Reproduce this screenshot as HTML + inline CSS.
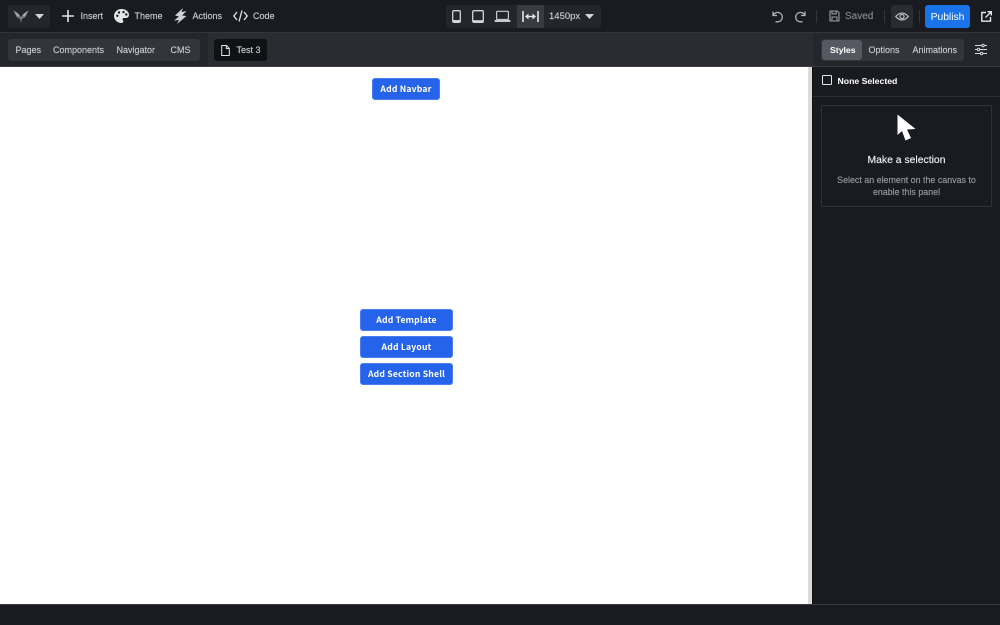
<!DOCTYPE html>
<html lang="en">
<head>
<meta charset="utf-8">
<title>Editor</title>
<style>
html,body{margin:0;padding:0;width:1000px;height:625px;overflow:hidden;background:#1a1b20}
body{position:relative;font-family:"Liberation Sans",sans-serif;color:#c9cace;font-size:9px}
.a{position:absolute}
.t{position:absolute;white-space:nowrap;line-height:12px;-webkit-text-stroke:.15px currentColor}
svg{position:absolute;overflow:visible}
.btn{position:absolute;background:#2563eb;border:1px solid #4a7df0;border-radius:3px;box-sizing:border-box;color:#fff;font:bold 8.600px/21px "Noto Sans CJK JP",sans-serif;letter-spacing:.2px;text-align:center;white-space:nowrap}
</style>
</head>
<body>
<!-- Top bar -->
<div class="a" style="left:0;top:0;width:1000px;height:32px;background:#1a1b20"></div>
<div class="a" style="left:0;top:32px;width:1000px;height:1px;background:#33353b"></div>
<!-- Second bar -->
<div class="a" style="left:0;top:33px;width:1000px;height:33px;background:#2a2c32"></div>
<div class="a" style="left:0;top:66px;width:1000px;height:1px;background:#3a3c42"></div>
<div class="a" style="left:0;top:33px;width:208px;height:33px;background:#24262b"></div>

<!-- Logo -->
<div class="a" style="left:8px;top:5px;width:42px;height:23px;background:#24262b;border-radius:3px"></div>
<svg style="left:13px;top:9px" width="16" height="15" viewBox="0 0 16 15"><path d="M.5 1.500 5 4.500 8 8 11 4.500 15.500 1.500 12.500 8 9 10 8 14 7 10 3.500 8Z" fill="#77787c"/><path d="M.5 1.500 5 4.500 7 7 4.500 7.500ZM15.500 1.500 11 4.500 9 7 11.500 7.500Z" fill="#a8a9ad"/></svg>
<svg style="left:35px;top:14px" width="9" height="5" viewBox="0 0 9 5"><path d="M0 0H9L4.500 5Z" fill="#d5d6d9"/></svg>

<!-- Insert -->
<svg style="left:62px;top:10px" width="12" height="12" viewBox="0 0 12 12"><path d="M6 0V12M0 6H12" stroke="#e4e5e7" stroke-width="1.600"/></svg>
<div class="t" style="left:80.500px;top:10px;">Insert</div>
<!-- Theme -->
<svg style="left:114px;top:9px" width="15" height="14" viewBox="0 0 15 14"><path fill-rule="evenodd" fill="#e4e5e7" d="M7.500 0C3.400 0 0 3.100 0 7s3.400 7 7.500 7c1.200 0 1.900-.7 1.900-1.600 0-.5-.3-.9-.5-1.200-.2-.3-.4-.6-.4-1 0-.7.600-1.200 1.300-1.200h1.900c1.900 0 3.300-1.300 3.300-3C15 2.600 11.700 0 7.500 0ZM3.300 8a1.200 1.200 0 1 1 0-2.400 1.200 1.200 0 0 1 0 2.400ZM5 4.700a1.200 1.200 0 1 1 0-2.400 1.200 1.200 0 0 1 0 2.400Zm4.500-.4a1.200 1.200 0 1 1 0-2.400 1.200 1.200 0 0 1 0 2.400Zm2.800 2.400a1.200 1.200 0 1 1 0-2.400 1.200 1.200 0 0 1 0 2.400Z"/></svg>
<div class="t" style="left:134.500px;top:10px;">Theme</div>
<!-- Actions -->
<svg style="left:174px;top:8px" width="13" height="16" viewBox="0 0 13 16"><path d="M9 0 1 7.500 5 8.500 0 12.500 5 12 3 16 12.500 8 8 7.500 12.500 3 7.500 4Z" fill="#d0d1d4"/></svg>
<div class="t" style="left:192.500px;top:10px;">Actions</div>
<!-- Code -->
<svg style="left:233px;top:10px" width="15" height="12" viewBox="0 0 15 12" fill="none" stroke="#e4e5e7" stroke-width="1.300"><path d="M4 2 .8 6 4 10M11 2l3.200 4L11 10M9 .5 6 11.500"/></svg>
<div class="t" style="left:253px;top:10px;">Code</div>

<!-- Device group -->
<div class="a" style="left:446px;top:5px;width:155px;height:23px;background:#24262b;border-radius:3px"></div>
<div class="a" style="left:517px;top:5px;width:27px;height:23px;background:#393b41"></div>
<svg style="left:452px;top:10px" width="9" height="13" viewBox="0 0 9 13"><rect x=".7" y=".7" width="7.600" height="11.600" rx="1.200" fill="none" stroke="#d4d5d8" stroke-width="1.300"/><rect x="1" y="10" width="7" height="2" fill="#d4d5d8"/></svg>
<svg style="left:472px;top:10px" width="12" height="13" viewBox="0 0 12 13"><rect x=".7" y=".7" width="10.600" height="11.600" rx="1.200" fill="none" stroke="#d4d5d8" stroke-width="1.300"/><rect x="1" y="10.200" width="10" height="2" fill="#d4d5d8"/></svg>
<svg style="left:494px;top:10px" width="17" height="13" viewBox="0 0 17 13" fill="none" stroke="#c8c9cc" stroke-width="1.200"><rect x="2.600" y="1.300" width="11.800" height="8.200" rx=".8"/><path d="M.5 10H16.500V11Q16.500 12 15.500 12H1.500Q.5 12 .5 11Z" fill="#c8c9cc" stroke="none"/></svg>
<svg style="left:522px;top:11px" width="17" height="11" viewBox="0 0 17 11"><path d="M1 0V11M16 0V11" stroke="#e4e5e7" stroke-width="1.600"/><path d="M4 5.500H13" stroke="#e4e5e7" stroke-width="1.400"/><path d="M3 5.500 6.500 2.500V8.500ZM14 5.500 10.500 2.500V8.500Z" fill="#e4e5e7"/></svg>
<div class="t" style="left:549px;top:11px;font-size:9.500px;">1450px</div>
<svg style="left:585px;top:14px" width="9" height="5" viewBox="0 0 9 5"><path d="M0 0H9L4.500 5Z" fill="#d5d6d9"/></svg>

<!-- Right top actions -->
<svg style="left:771px;top:9.500px" width="13" height="13" viewBox="0 0 13 13" fill="none" stroke="#b0b1b5" stroke-width="1.300"><path d="M2 1.500V5.500H6"/><path d="M2.300 5.300A4.700 4.700 0 1 1 6.500 11.800H4.500"/></svg>
<svg style="left:794px;top:9.500px" width="13" height="13" viewBox="0 0 13 13" fill="none" stroke="#b0b1b5" stroke-width="1.300"><path d="M11 1.500V5.500H7"/><path d="M10.700 5.300A4.700 4.700 0 1 0 6.500 11.800H8.500"/></svg>
<div class="a" style="left:816px;top:10px;width:1px;height:13px;background:#33353b"></div>
<svg style="left:829px;top:10px" width="11" height="12" viewBox="0 0 11 12" fill="none" stroke="#9a9b9f" stroke-width="1.100"><path d="M1 1H8.300L10 2.700V11H1Z"/><path d="M3 1V3.800H7.200V1M3 10.800V7H8V10.800"/></svg>
<div class="t" style="left:845px;top:11px;font-size:10px;color:#85868a;">Saved</div>
<div class="a" style="left:884px;top:10px;width:1px;height:13px;background:#33353b"></div>
<div class="a" style="left:891px;top:5px;width:22px;height:23px;background:#2a2c31;border-radius:3px"></div>
<svg style="left:895px;top:12px" width="14" height="9" viewBox="0 0 14 9" fill="none" stroke="#c8c9cc" stroke-width="1.100"><path d="M.7 4.500Q7 -2.500 13.300 4.500 7 11.500 .7 4.500Z"/><circle cx="7" cy="4.500" r="2.100"/></svg>
<div class="a" style="left:919px;top:10px;width:1px;height:13px;background:#33353b"></div>
<div class="a" style="left:925px;top:5px;width:45px;height:23px;background:#1a73e8;border-radius:3px;color:#fff;font-size:10.300px;line-height:25px;text-align:center">Publish</div>
<svg style="left:981px;top:11px" width="11" height="11" viewBox="0 0 11 11" fill="none" stroke="#e4e5e7" stroke-width="1.400"><path d="M5 1.500H.8V10.200H9.500V6"/><path d="M4.500 6.500 10 1M6.500 .7H10.300V4.500"/></svg>

<!-- Left tabs -->
<div class="a" style="left:8px;top:39px;width:192px;height:22px;background:#33353b;border-radius:3px"></div>
<div class="t" style="left:15.500px;top:44px;">Pages</div>
<div class="t" style="left:53px;top:44px;">Components</div>
<div class="t" style="left:116.500px;top:44px;">Navigator</div>
<div class="t" style="left:170.500px;top:44px;">CMS</div>
<!-- Page tab -->
<div class="a" style="left:214px;top:39px;width:53px;height:22px;background:#101114;border-radius:3px"></div>
<svg style="left:221px;top:45px" width="9" height="11" viewBox="0 0 9 11" fill="none" stroke="#e4e5e7" stroke-width="1"><path d="M.7.500H5.500L8.300 3.300V10.500H.7Z"/><path d="M5.300.500V3.500H8.300"/></svg>
<div class="t" style="left:236.500px;top:44px;">Test 3</div>

<!-- Canvas -->
<div class="a" style="left:0;top:67px;width:808px;height:537px;background:#fff"></div>
<div class="a" style="left:808px;top:67px;width:4px;height:537px;background:#dcdcdc"></div>
<div class="a" style="left:812px;top:67px;width:1px;height:537px;background:#111215"></div>
<div class="a" style="left:0;top:604px;width:1000px;height:1px;background:#3a3c42"></div>
<div class="a" style="left:0;top:605px;width:1000px;height:20px;background:#1a1b20"></div>

<div class="btn" style="left:372px;top:78px;width:68px;height:22px">Add Navbar</div>
<div class="btn" style="left:360px;top:309px;width:93px;height:22px">Add Template</div>
<div class="btn" style="left:360px;top:336px;width:93px;height:22px">Add Layout</div>
<div class="btn" style="left:360px;top:363px;width:93px;height:22px">Add Section Shell</div>

<!-- Right panel top tabs -->
<div class="a" style="left:813px;top:33px;width:187px;height:33px;background:#24262b"></div>
<div class="a" style="left:821px;top:39px;width:143px;height:22px;background:#33353b;border-radius:3px"></div>
<div class="a" style="left:822px;top:40px;width:40px;height:20px;background:#565961;border-radius:3px"></div>
<div class="t" style="left:830px;top:44px;color:#fff;font-weight:bold;font-size:8.700px;-webkit-text-stroke:0;">Styles</div>
<div class="t" style="left:868.500px;top:44px;">Options</div>
<div class="t" style="left:912.500px;top:44px;">Animations</div>
<svg style="left:975px;top:44px" width="12" height="11" viewBox="0 0 12 11" fill="#1a1b20" stroke="#d8d9dc" stroke-width="1"><path d="M0 1.500H12M0 5.500H12M0 9.500H12"/><circle cx="8" cy="1.500" r="1.200"/><circle cx="3.500" cy="5.500" r="1.200"/><circle cx="6.500" cy="9.500" r="1.200"/></svg>

<!-- None Selected -->
<div class="a" style="left:822px;top:75px;width:10px;height:10px;box-sizing:border-box;border:1.500px solid #e4e5e7;border-radius:1.500px"></div>
<div class="t" style="left:837.500px;top:75px;color:#fff;font-weight:bold;font-size:8.700px;-webkit-text-stroke:0;">None Selected</div>
<div class="a" style="left:813px;top:96px;width:187px;height:1px;background:#2e3036"></div>

<!-- Selection card -->
<div class="a" style="left:821px;top:105px;width:171px;height:102px;box-sizing:border-box;border:1px solid #2e3036"></div>
<svg style="left:897px;top:114px" width="20" height="27" viewBox="0 0 20 27"><path d="M0.500 0.500V21L5 17 8.500 26.500 14 24 10 15.500 18.500 15Z" fill="#fff"/></svg>
<div class="t" style="left:821px;width:171px;top:155px;text-align:center;color:#eef0f2;font-size:10.400px;">Make a selection</div>
<div class="t" style="left:821px;width:171px;top:174px;text-align:center;color:#97989c;font-size:8.900px;">Select an element on the canvas to</div>
<div class="t" style="left:821px;width:171px;top:186px;text-align:center;color:#97989c;font-size:8.900px;">enable this panel</div>
</body>
</html>
